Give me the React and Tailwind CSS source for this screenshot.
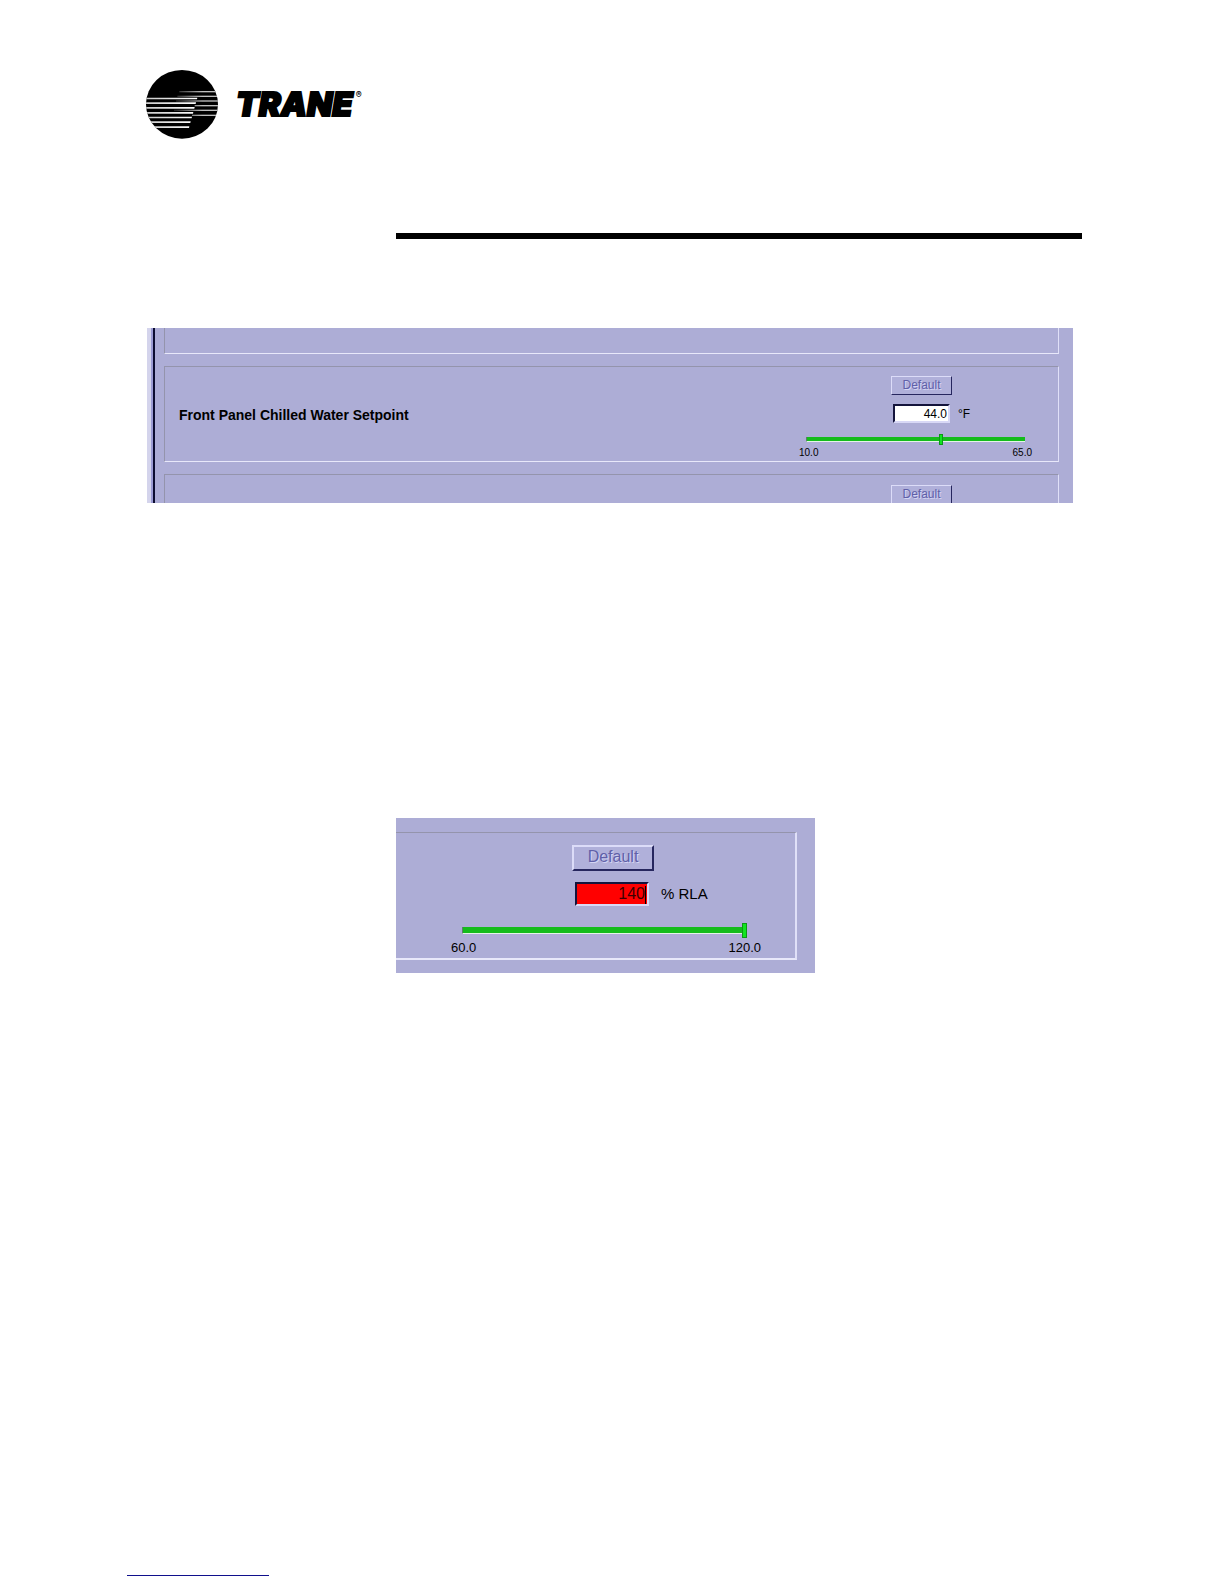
import { useState } from "react";

const LEFT_STRIPES = [
  { y: 85, end: 153 },
  { y: 99, end: 149 },
  { y: 113, end: 145 },
  { y: 128, end: 141 },
  { y: 142, end: 137 },
  { y: 156, end: 133 },
  { y: 171, end: 129 },
];

const RIGHT_STRIPES = [
  { y: 65, start: 100 },
  { y: 79, start: 94 },
  { y: 93, start: 90 },
  { y: 107, start: 146 },
  { y: 121, start: 84 },
  { y: 136, start: 138 },
];

const Logo = () => (
  <div className="flex items-center gap-[18px]">
    <svg viewBox="0 0 216 207" className="h-[69px] w-[72px]" aria-hidden="true">
      <defs>
        <clipPath id="globe">
          <ellipse cx="108" cy="103" rx="108" ry="103" />
        </clipPath>
        <linearGradient id="fade" gradientUnits="userSpaceOnUse" x1="90" x2="170" y1="0" y2="0">
          <stop offset="0" stopColor="#fff" stopOpacity="0.15" />
          <stop offset="1" stopColor="#fff" stopOpacity="0.75" />
        </linearGradient>
        <linearGradient id="bright" gradientUnits="userSpaceOnUse" x1="0" x2="150" y1="0" y2="0">
          <stop offset="0" stopColor="#fff" stopOpacity="0.8" />
          <stop offset="1" stopColor="#fff" />
        </linearGradient>
      </defs>
      <g clipPath="url(#globe)">
        <rect width="216" height="207" fill="#000" />
        {LEFT_STRIPES.map(({ y, end }) => (
          <path key={y} d={`M0 ${y - 2}H${end + 1}L${end} ${y + 3}H0Z`} fill="url(#bright)" />
        ))}
        {RIGHT_STRIPES.map(({ y, start }) => (
          <rect key={y} x={start} y={y - 2} width={216 - start} height="4" fill="url(#fade)" />
        ))}
      </g>
    </svg>
    <div className="flex items-start gap-[3px] font-[Inter,sans-serif] text-black">
      <span className="text-[33px] leading-[37px] font-black italic [-webkit-text-stroke:2px_#000]">TRANE</span>
      <span className="text-[9px] leading-[18px] font-semibold">®</span>
    </div>
  </div>
);

const SIZES = {
  small: {
    column: "w-[233px]",
    button: "ml-[92px] h-[19px] w-[61px] border pb-[2px] text-xs",
    row: "mt-[9px] gap-2 pl-[94px] text-xs",
    input: "h-[19px] w-[57px] border-2 pr-px text-xs",
    slider:
      "mt-[11px] h-[11px] px-[7px] [&_input]:h-[11px] [&_input::-webkit-slider-runnable-track]:h-[5px] [&_input::-webkit-slider-thumb]:-mt-[3px] [&_input::-webkit-slider-thumb]:h-[11px] [&_input::-webkit-slider-thumb]:w-1",
    labels: "mt-[2px] text-[10px] leading-3",
  },
  large: {
    column: "w-[310px]",
    button: "ml-[121px] h-[26px] w-[82px] border-2 pb-[2px] text-base",
    row: "mt-[11px] gap-3 pl-[124px] text-[15px]",
    input: "h-6 w-[74px] border-2 pr-[2px] text-base",
    slider:
      "mt-4 h-4 pr-[14px] pl-[11px] [&_input]:h-4 [&_input::-webkit-slider-runnable-track]:h-[7px] [&_input::-webkit-slider-thumb]:-mt-1 [&_input::-webkit-slider-thumb]:h-[15px] [&_input::-webkit-slider-thumb]:w-[5px]",
    labels: "mt-[2px] pb-px text-[13px] leading-4",
  },
};

const DefaultButton = ({ size }) => (
  <button
    type="button"
    disabled
    className={`flex shrink-0 items-center justify-center border-t-[#dcdcf8] border-r-[#26265e] border-b-[#26265e] border-l-[#dcdcf8] bg-[#b0b0da] text-[#6060a8] [text-shadow:1px_1px_0_#d4d4f4] ${SIZES[size].button}`}
  >
    Default
  </button>
);

const SetpointControl = ({ id, label, unit, min, max, initial, invalid, size }) => {
  const [value, setValue] = useState(initial);
  const styles = SIZES[size];

  return (
    <div className={`flex shrink-0 flex-col ${styles.column}`}>
      <DefaultButton size={size} />
      <div className={`flex items-center text-black ${styles.row}`}>
        <div className="relative flex">
          <input
            id={id}
            type="text"
            aria-label={label}
            value={value}
            onChange={(e) => setValue(e.target.value)}
            className={`border-t-[#14143c] border-r-[#d8d8f6] border-b-[#d8d8f6] border-l-[#14143c] text-right outline-none ${
              invalid ? "bg-[#ff0000] text-[#3c0000]" : "bg-white text-black"
            } ${styles.input}`}
          />
          {invalid && <span className="absolute top-1 right-[3px] h-[18px] w-px bg-black" />}
        </div>
        <label htmlFor={id}>{unit}</label>
      </div>
      <div className={`flex ${styles.slider}`}>
        <input
          type="range"
          aria-label={`${label} slider`}
          min={min}
          max={max}
          step="0.1"
          value={Number(value) || min}
          onChange={(e) => setValue(Number(e.target.value).toFixed(1))}
          className="w-full appearance-none bg-transparent [&::-webkit-slider-runnable-track]:border-b [&::-webkit-slider-runnable-track]:border-l [&::-webkit-slider-runnable-track]:border-b-[#e4f4e8] [&::-webkit-slider-runnable-track]:border-l-[#5c7c6c] [&::-webkit-slider-runnable-track]:bg-[#14bc1c] [&::-webkit-slider-thumb]:appearance-none [&::-webkit-slider-thumb]:border [&::-webkit-slider-thumb]:border-[#0a9a14] [&::-webkit-slider-thumb]:bg-[#10e420]"
        />
      </div>
      <div className={`flex justify-between text-black ${styles.labels}`}>
        <span>{min.toFixed(1)}</span>
        <span>{max.toFixed(1)}</span>
      </div>
    </div>
  );
};

const groupBox = "border-t-[#9494ac] border-r-[#e0e0f8] border-b-[#e8e8fa] border-l-[#9494ac]";

const ChilledWaterPanel = () => (
  <section className="flex bg-[#adadd6]">
    <div className="w-2 shrink-0 border-r-2 border-l-4 border-r-[#0c0c30] border-l-[#d4d4ec] bg-[#9c9cd4]" />
    <div className="flex min-w-0 grow flex-col gap-3 pr-[14px] pl-[9px]">
      <div className={`h-[26px] border-x border-b ${groupBox}`} />
      <div className={`flex items-center justify-between border pt-[9px] pr-[26px] pb-[2px] pl-[14px] ${groupBox}`}>
        <h2 className="pb-[5px] text-sm font-bold text-black">Front Panel Chilled Water Setpoint</h2>
        <SetpointControl
          id="chilled-water"
          label="Front Panel Chilled Water Setpoint"
          unit="°F"
          min={10}
          max={65}
          initial="44.0"
          size="small"
        />
      </div>
      <div className={`flex h-[29px] justify-end overflow-hidden border-x border-t pt-[10px] pr-[26px] ${groupBox}`}>
        <div className={SIZES.small.column}>
          <DefaultButton size="small" />
        </div>
      </div>
    </div>
  </section>
);

const CurrentLimitPanel = () => (
  <section className="w-[419px] max-w-full bg-[#adadd6] pt-[14px] pr-[18px] pb-[13px]">
    <div className={`flex justify-end border-t border-r-2 border-b-2 pt-3 pr-[34px] pb-px ${groupBox}`}>
      <SetpointControl
        id="current-limit"
        label="Current limit setpoint"
        unit="% RLA"
        min={60}
        max={120}
        initial="140"
        invalid
        size="large"
      />
    </div>
  </section>
);

const App = () => (
  <div className="flex min-h-screen flex-col bg-white font-['Liberation_Sans',Arial,sans-serif]">
    <header className="pt-[70px] pr-[142px] pl-[146px]">
      <Logo />
      <hr className="mt-[94px] ml-[250px] h-[6px] border-0 bg-black" />
    </header>
    <main className="pt-[89px] pr-[151px] pl-[147px]">
      <ChilledWaterPanel />
      <div className="mt-[315px] pl-[249px]">
        <CurrentLimitPanel />
      </div>
    </main>
    <footer className="mt-auto pb-2 pl-[127px]">
      <a href="#top" aria-label="Back to top" className="block h-px w-[142px] bg-[#10108c]" />
    </footer>
  </div>
);

export default App;
